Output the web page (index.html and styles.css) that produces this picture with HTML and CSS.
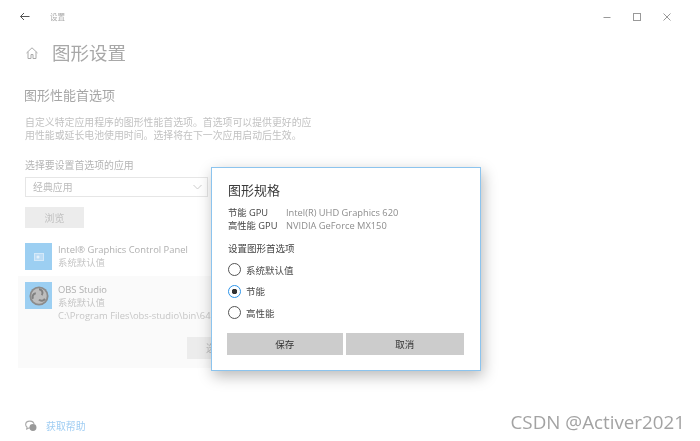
FILE: index.html
```html
<!DOCTYPE html>
<html lang="zh">
<head>
<meta charset="utf-8">
<title>设置</title>
<link rel="stylesheet" href="styles.css">
</head>
<body>
<div class="window">
  <div class="titlebar">
    <div class="title-left">
      <svg class="back" width="12" height="12" viewBox="0 0 12 12"><path d="M10.500 5.500H1.500M5 2 1.500 5.500 5 9" fill="none" stroke="#555" stroke-width="1"/></svg>
      <span class="app-name">设置</span>
    </div>
    <div class="controls">
      <svg width="10" height="10" viewBox="0 0 10 10"><path d="M1.5 5.5h7" stroke="#999" fill="none"/></svg>
      <svg width="10" height="10" viewBox="0 0 10 10"><rect x="1.5" y="1.5" width="7" height="7" stroke="#999" fill="none"/></svg>
      <svg width="10" height="10" viewBox="0 0 10 10"><path d="M1.5 1.5l7 7M8.5 1.5l-7 7" stroke="#999" fill="none"/></svg>
    </div>
  </div>
  <main class="content">
    <div class="page-head">
      <svg class="home" width="14" height="14" viewBox="0 0 14 14"><path d="M1.5 7 7 1.8 12.500 7M3 5.800V12.500h3V8.500h2v4h3V5.800" fill="none" stroke="#aaa" stroke-width="1"/></svg>
      <h1>图形设置</h1>
    </div>
    <h2>图形性能首选项</h2>
    <p class="desc">自定义特定应用程序的图形性能首选项。首选项可以提供更好的应<br>用性能或延长电池使用时间。选择将在下一次应用启动后生效。</p>
    <label class="field-label">选择要设置首选项的应用</label>
    <div class="select"><span>经典应用</span>
      <svg width="9" height="6" viewBox="0 0 9 6"><path d="M.5 1 4.500 5l4-4" fill="none" stroke="#ccc"/></svg>
    </div>
    <div class="browse">浏览</div>
    <div class="app-row">
      <div class="app-icon">
        <svg width="10" height="8" viewBox="0 0 10 8"><rect x=".5" y=".5" width="9" height="7" fill="#bcdcf5" stroke="#d4e9f9"/><circle cx="4" cy="4" r="1.500" fill="#e4f1fb"/></svg>
      </div>
      <div class="app-text">
        <div class="app-name-row">Intel® Graphics Control Panel</div>
        <div class="app-sub">系统默认值</div>
      </div>
    </div>
    <div class="app-row selected">
      <div class="row-top">
        <div class="app-icon">
          <svg width="20" height="20" viewBox="0 0 22 22"><circle cx="11" cy="11" r="10.500" fill="#8b8b8b"/><circle cx="11" cy="11" r="8.500" fill="#bdbdbd"/><path d="M11 3.500a4 4 0 0 1 3 6.500M17.500 14a4 4 0 0 1-6.500 1M4.500 14a4 4 0 0 1 3-6" fill="none" stroke="#808080" stroke-width="2.200"/></svg>
        </div>
        <div class="app-text">
          <div class="app-name-row">OBS Studio</div>
          <div class="app-sub">系统默认值</div>
          <div class="app-sub">C:\Program Files\obs-studio\bin\64</div>
        </div>
      </div>
      <div class="row-actions"><div class="options">选项</div></div>
    </div>
    <div class="help">
      <svg width="12" height="12" viewBox="0 0 11 11"><path d="M4.500 1C2.300 1 .6 2.400.6 4.200c0 1 .5 1.800 1.300 2.400L1.600 8.300l1.900-1c.4.100.7.100 1 .1" fill="none" stroke="#aaa"/><path d="M4.500 1c2 0 3.500 1.100 3.800 2.700" fill="none" stroke="#aaa"/><circle cx="7.300" cy="6.800" r="3.200" fill="#999"/></svg>
      <span>获取帮助</span>
    </div>
  </main>
</div>
<section class="dialog">
  <h3>图形规格</h3>
  <dl class="gpu">
    <dt>节能 GPU</dt><dd>Intel(R) UHD Graphics 620</dd>
    <dt>高性能 GPU</dt><dd>NVIDIA GeForce MX150</dd>
  </dl>
  <div class="pref-label">设置图形首选项</div>
  <div class="radios">
    <div class="radio"><i class="dot"></i><span>系统默认值</span></div>
    <div class="radio on"><i class="dot"></i><span>节能</span></div>
    <div class="radio"><i class="dot"></i><span>高性能</span></div>
  </div>
  <div class="actions">
    <div class="btn save">保存</div>
    <div class="btn cancel">取消</div>
  </div>
</section>
<div class="watermark">CSDN @Activer2021</div>
</body>
</html>
```
FILE: styles.css
```css
* { box-sizing: border-box; }
html, body { margin: 0; height: 441px; width: 700px; overflow: hidden; background: #fff; }
body { position: relative; font-family: "Open Sans", "Noto Sans CJK SC", sans-serif; filter: blur(.35px); }
h1, h2, h3, p, dl, dd { margin: 0; font-weight: 400; }
.window { height: 441px; display: flex; flex-direction: column; }
.titlebar { height: 33px; flex: none; display: flex; justify-content: space-between; align-items: center; }
.title-left { display: flex; align-items: center; padding-left: 19px; gap: 19px; }
.app-name { font-size: 7.500px; color: #aaa; line-height: 12px; }
.controls { display: flex; gap: 20px; padding-right: 28px; }
.content { flex: 1; position: relative; padding: 8px 0 0 25px; display: flex; flex-direction: column; align-items: flex-start; }
.page-head { display: flex; align-items: center; gap: 13px; height: 24px; }
.home { flex: none; }
h1 { font-size: 18.500px; line-height: 24px; color: #a8a8a8; }
h2 { font-size: 13px; line-height: 18px; color: #a6a6a6; margin-top: 21px; margin-left: -1px; }
.desc { font-size: 9.900px; line-height: 13px; color: #c2c2c2; margin-top: 12px; width: 300px; white-space: nowrap; }
.field-label { font-size: 9.900px; line-height: 14px; color: #b5b5b5; margin-top: 16px; }
.select { width: 183px; height: 20px; margin-top: 5px; border: 1.500px solid #e6e6e6; display: flex; align-items: center; justify-content: space-between; padding: 0 5px 0 7px; font-size: 9.900px; color: #bbb; }
.browse { width: 59px; height: 21px; margin-top: 10px; background: #ececec; color: #c0c0c0; font-size: 9.900px; display: flex; align-items: center; justify-content: center; }
.app-row { display: flex; gap: 6px; margin-top: 15px; }
.app-icon { width: 27px; height: 27px; flex: none; background: #9ccff2; display: flex; align-items: center; justify-content: center; }
.app-text { display: flex; flex-direction: column; }
.app-name-row { font-size: 9.400px; line-height: 13px; color: #b0b0b0; white-space: nowrap; }
.app-sub { font-size: 9.400px; line-height: 13px; color: #c6c6c6; white-space: nowrap; }
.app-row.selected { flex-direction: column; gap: 0; background: #fafafa; margin: 6px 0 0 -7px; width: 200px; height: 92px; padding: 6px 0 0 7px; }
.row-top { display: flex; gap: 6px; }
.row-top .app-text { padding-top: 1px; }
.row-actions { display: flex; justify-content: flex-end; margin-top: 15px; }
.options { width: 60px; height: 22px; margin-right: -29px; background: #ececec; color: #bbb; font-size: 9.900px; line-height: 22px; padding-left: 19px; }
.help { display: flex; align-items: center; gap: 9px; margin-top: 51px; font-size: 9.900px; color: #9fcdf3; line-height: 14px; }
.dialog { position: absolute; left: 211px; top: 167px; width: 270px; height: 204px; background: #fff; border: 1px solid #8cc4ee; box-shadow: 2px 5px 14px rgba(0,0,0,.28); padding: 13px 16px 0 16px; }
h3 { font-size: 13px; line-height: 18px; color: #3c3c3c; }
.gpu { display: grid; grid-template-columns: 58px 1fr; font-size: 9.300px; line-height: 13px; margin-top: 7px; }
.gpu dt { color: #444; white-space: nowrap; }
.gpu dd { color: #8d8d8d; white-space: nowrap; }
.pref-label { font-size: 9.500px; line-height: 14px; color: #444; margin-top: 10px; }
.radios { display: flex; flex-direction: column; gap: 8px; margin-top: 7px; }
.radio { display: flex; align-items: center; gap: 5px; height: 13.500px; font-size: 9.500px; color: #4a4a4a; }
.dot { width: 13px; height: 13px; border: 1.500px solid #555; border-radius: 50%; flex: none; display: block; }
.radio.on .dot { border-color: #2e95ea; background: radial-gradient(circle, #333 0 2.500px, #fff 3px); }
.actions { display: flex; gap: 3px; margin: 13px 0 0 -1px; }
.btn { height: 22px; background: #ccc; color: #333; font-size: 9.500px; display: flex; align-items: center; justify-content: center; }
.save { width: 116px; }
.cancel { width: 119px; }
.watermark { position: absolute; right: 15px; top: 410px; font-size: 18.800px; line-height: 24px; color: #a3a3a3; font-family: "Open Sans", sans-serif; white-space: nowrap; }
```
